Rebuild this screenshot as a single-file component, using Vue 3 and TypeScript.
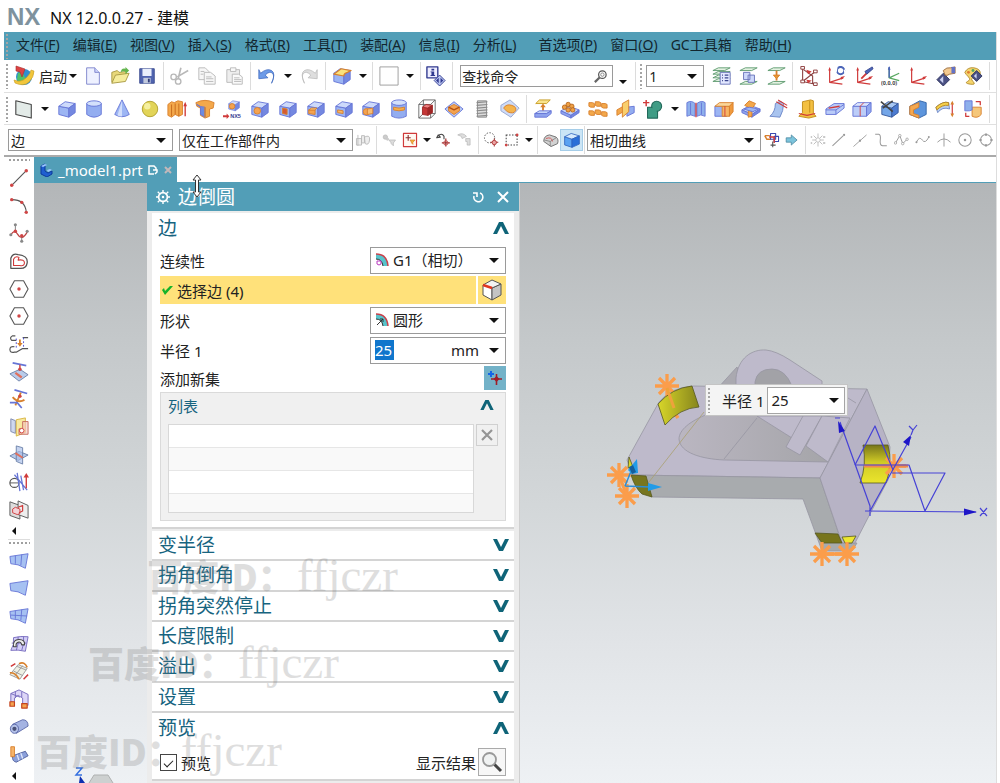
<script setup lang="ts">
import { ref } from 'vue'

type Item =
  | { kind: 'icons'; names: string[]; active?: string }
  | { kind: 'arrow' | 'sep' | 'grip' | 'start' | 'search' | 'tail' }
  | { kind: 'select'; label: string; value: string; size: string }

const menus: { text: string; key?: string; wide?: boolean }[] = [
  { text: '文件', key: 'F' },
  { text: '编辑', key: 'E' },
  { text: '视图', key: 'V' },
  { text: '插入', key: 'S' },
  { text: '格式', key: 'R' },
  { text: '工具', key: 'T' },
  { text: '装配', key: 'A' },
  { text: '信息', key: 'I' },
  { text: '分析', key: 'L' },
  { text: '首选项', key: 'P', wide: true },
  { text: '窗口', key: 'O' },
  { text: 'GC工具箱' },
  { text: '帮助', key: 'H' },
]

const p = (d: string, fill = 'none', stroke = 'none', w = 1) =>
  `<path d="${d}" fill="${fill}" stroke="${stroke}" stroke-width="${w}" stroke-linejoin="round"/>`
const c = (x: number, y: number, r: number, fill = 'none', stroke = 'none', w = 1) =>
  `<circle cx="${x}" cy="${y}" r="${r}" fill="${fill}" stroke="${stroke}" stroke-width="${w}"/>`

const BL = '#6675d6'
const OR = '#d8802c'
const RD = '#d03a3a'
const GY = '#b8b8b8'

const cube = (f = '#9cb5f3', t = '#cddafb', s = '#7488e0', k = BL) =>
  p('M2 8l11 2v10L2 17z', f, k) + p('M2 8l7-5 11 2-7 5z', t, k) + p('M13 10l7-5v10l-7 5z', s, k)
const slab = (y: number, f = '#c7d6fa', k = BL) =>
  p(`M1 ${y}l9-5 11 4-9 6z`, f, k) + p(`M1 ${y}v3l11 5v-3z`, '#8fa4ee', k) + p(`M12 ${y + 5}l9-6v3l-9 6z`, '#7688e0', k)
const layer = (y: number, k = '#5e9a70') => p(`M1 ${y}l6-3h13l-6 3z`, '#e4f2e2', k)
const axes = p('M4 3v15l15-5M4 18l14 2', 'none', RD, 1.3) + p('M2.5 5L4 1l1.5 4zM16 12l5-1-4 4z', RD)
const sheet = p('M1 6l20-3-3 16Q10 14 2 14z', '#a6c1f2', BL)
const dot = (x: number, y: number) => c(x, y, 1.9, '#cf4545')
const hex = p('M6 2h10l5 9-5 9H6l-5-9z', '#fff', '#555', 1.2) + dot(11, 11)

const icons: Record<string, string> = {
  world: c(11, 12, 8, '#2f8fd0') + p('M5 8q5-2 6 2t4 3-3 6q-6 1-8-5z', '#4fc06a') + p('M1 15q7 3 12-2t5-8l3 1q0 6-5 11T2 18z', '#f1c63b', '#c79a20', 0.6) + p('M3 1l9 3-3 8-2-5-4-1z', '#dc4343', '#a62d2d', 0.6),
  new: p('M4 2h9l5 5v13H4z', '#eef1ff', '#7c83cb') + p('M13 2v5h5', '#cdd3fa', '#7c83cb'),
  open: p('M2 18V7l6-2 2 2 8-1v5', '#e8d87a', '#a79741') + p('M2 19l4-9 15-2-4 9z', '#f5ec9c', '#a79741') + p('M12 7q0-5 5-4V1l4 4-4 4V6q-3-1-5 1z', '#65b64f'),
  save: p('M3 3h16v16H3z', '#5064b0', '#3c4c91') + p('M6 3h10v8H6z', '#e9eefb') + p('M7 13h8v6H7z', '#c1c9dd') + p('M12 14h2v4h-2z', '#2f3c78'),
  cut: p('M12 2L9 14M20 5L8 12', 'none', GY, 1.8) + c(4, 12, 3, 'none', GY, 1.5) + c(9, 17, 3, 'none', GY, 1.5),
  copy: p('M2 2h7l4 4v9H2z', '#f7f7f7', GY) + p('M8 7h7l5 4v9H8z', '#f7f7f7', GY) + p('M10 12h6M10 14h8M10 17h8M4 6h4M4 9h3', 'none', GY),
  paste: p('M2 4h14v14H2z', '#eee', GY) + p('M6 2h6v4H6zM8 9h7l4 3v8H8z', '#fafafa', GY) + p('M10 13h6M10 15h8M10 17h8', 'none', GY),
  undo: p('M4 8q7-6 12-3t0 14q4-8 1-11t-8 2l3 3-10 1V4z', '#6d9be8', '#3a66bd', 0.8),
  redo: p('M18 8q-7-6-12-3t0 14Q2 11 5 8t8 2l-3 3 10 1V4z', '#dedede', GY, 0.8),
  edge: cube() + p('M2 9l8-6 11 2-4 2q-4 1-4 4L2 9z', '#fae27d', OR, 1.3),
  blank: p('M1 1h20v20H1z', '#fff', '#999'),
  info: p('M1 1h12v12H1z', '#eef', '#30398f', 1.5) + p('M6 3h3v2H6zM5 6h4v4h1v1H5v-1h1V7H5z', '#30398f') + p('M15 10l6 6-6 6-6-6z', '#b9c4f0', '#30398f') + p('M14 13v6l-3-3zM16 13l3 3-3 3z', '#30398f'),
  layers1: layer(17) + layer(13) + layer(9) + layer(5) + p('M9 7h11v13H9z', '#e3e8ff', '#6872b8') + p('M11 10h1M14 10h4M11 13h1M14 13h4M11 16h1M14 16h4', 'none', '#3b468e', 1.3),
  layers2: layer(5) + layer(20) + p('M5 7h7v8H5zM10 10h7v8h-7z', '#cdd8fa', '#6872b8'),
  layers3: layer(5) + layer(20) + p('M10.500 5v11', 'none', OR, 2) + p('M7 10h7l-3.500 4z', '#e69732', OR),
  wcs1: p('M4 2v15l14 3M4 17L18 6M5 4l10 7v8', 'none', '#8a4040', 1.2) + [[4, 2], [4, 17], [18, 6], [18, 20]].map(([x, y]) => p(`M${x - 2} ${y - 1.500}h4v3h-4z`, '#fff', '#8a3535')).join('') + p('M8 4l6 2-4 3zM8 15l6 1-4 3z', RD),
  wcs2: axes + c(16, 5, 4, 'none', '#4c65b8', 2.200) + p('M12 1l-1 6M20 4l1 4', 'none', '#fff', 1.5),
  wcs3: axes + p('M8 14l8-8', 'none', RD, 2) + p('M12 6l8-5 1 2-7 6z', '#4c65b8', '#3a4a92'),
  wcs4: p('M9 2v11l11-5M9 13l11 3', 'none', '#58a860', 1.4) + p('M9 1v12', 'none', '#4c65b8', 1.5) + p('M7.500 4L9 0l1.500 4z', '#4c65b8') + '<text x="0" y="21" font-size="6" font-weight="700" font-family="Noto Sans" fill="#444">(0,0,0)</text>',
  wcs5: axes,
  hand: p('M8 8l7 7-7 7-7-7z', '#4a5083', '#30355f') + p('M8 11v8l-4-4z', '#cdd2f2') + p('M8 5q4-4 8-3l5-1v7l-6 1q-3 2-5 1z', '#f3c98e', '#9b6a3a') + p('M17 1h4v7h-4z', '#6372c6'),
  palette: p('M2 7q3-6 10-5t7 6-6 5-2 4-3 3-3-3 1-5-4-5z', '#f4d46c', '#b38c2e') + c(6, 7, 1.600, '#e07b2f') + c(11, 5, 1.600, '#58a860') + p('M15 5l6 6-6 6-6-6z', '#4a5083', '#30355f') + p('M15 8v6l-3-3z', '#cdd2f2'),

  plane: p('M2 2l17 4v15L2 17z', '#e3ebe8', '#444', 1.200),
  block: cube(),
  cylinder: p('M3 5v12q8 6 16 0V5z', '#93adf0', BL) + '<ellipse cx="11" cy="5" rx="8" ry="3" fill="#d3e0fb" stroke="#6675d6"/>',
  cone: p('M11 1L3 17q8 5 16 0z', '#9db6f4', BL) + p('M11 2L6 18q3 2 5 1z', '#d2defb'),
  sphere: c(11, 11, 8.500, '#e2d458', '#b09f2c') + c(8, 8, 3.500, '#f5f0a0'),
  extrude: p('M1 6l4-3 3 1 4-2 5 1v14l-4 2-4-2-4 3-4-2z', '#f3a84b', OR) + p('M5 6v13M9 5v12M13 5v14', 'none', '#c76a1c') + p('M20 19V6', 'none', RD, 1.500) + p('M18 8l2-5 2 5z', RD),
  revolve: p('M1 4q10-5 20 0l-1 6-4 1v8l-5 2-5-3v-8l-4-2z', '#f3a84b', OR) + p('M2 6l4 3v8l5 3V9q-5 0-9-3z', '#6d8be0', BL) + p('M11 9v11', 'none', OR, 1.500),
  nx5: '<g transform="translate(5) scale(.65)">' + cube() + '</g>' + c(10, 8, 3, '#f4a350', OR) + p('M0 18h4v-2l3 3-3 3v-2H0z', RD) + '<text x="8" y="21" font-size="6" font-weight="700" font-family="Liberation Sans" fill="#333a90">NX5</text>',
  hole: cube() + c(8, 13, 3.600, '#f4a350', OR),
  boss: cube() + p('M5 10l5 1v6l-5-1z', '#d65a32', OR),
  pocket: cube() + p('M3 12h7v5l-7-1z', '#f4a350', OR) + p('M3 12l3-2h6l-2 2z', '#fbd28c', OR),
  pad: cube() + p('M4 12l6 1v3l-6-1z', '#f7b763', OR),
  slot: cube() + p('M4 13q4-2 7 1l-1 2q-4-2-6 0z', '#f4a350', OR),
  emboss: cube() + c(6, 14, 3.500, '#f4a350', OR) + p('M7 11l6-1v6l-6 1z', '#f7bd74', OR),
  groove: p('M3 4v15q8 4 16 0V4z', '#93adf0', BL) + p('M5 9q6 2 12 0v3q-6 2-12 0z', '#f4b04c', OR) + '<ellipse cx="11" cy="4" rx="8" ry="3" fill="#d3e0fb" stroke="#6675d6"/>',
  shell: p('M2 6h13v15H2zM7 1h13v15H7zM2 6l5-5M15 6l5-5M2 21l5-5M15 21l5-5', 'none', '#666') + p('M6 9l6 1v8l-6-1z', '#c53636', '#a12a2a') + p('M6 9l4-3 7 1-5 3z', '#ed8080', '#a12a2a') + p('M12 10l5-3v8l-5 3z', '#a12626', '#a12a2a'),
  offset: p('M1 11l10-8 10 8-10 9z', '#b9cbf6', BL) + p('M5 9l6-3 6 3v4l-6 4-6-4z', '#f4a350', OR) + p('M5 9l6 3 6-3', 'none', '#b34f12', 1.500),
  thread: p('M6 2h10v18H6z', '#dcdcdc', '#888') + p('M5 4l12-1M5 7l12-1M5 10l12-1M5 13l12-1M5 16l12-1M5 19l12-1', 'none', '#8a8a8a', 1.200),
  feat: p('M11 1l10 9-9 10L1 13V7z', '#cfdcf8', '#93a3d0') + p('M4 10q3-5 9-3t4 6-9 1z', '#f4b44c', OR),
  datum: p('M3 5l4-4h12l-4 4z', '#f9e38c', '#c79a20') + p('M11 7v6', 'none', OR, 2) + p('M8 9l3-4 3 4z', OR) + p('M2 16l5-3h13l-5 3z', '#c7d6fa', BL) + p('M2 16v4h13l5-4v-3l-5 3z', '#8fa4ee', BL),
  pattern: slab(13) + [[5, 9], [9, 6], [13, 8], [9, 12], [14, 12]].map(([x, y]) => c(x, y, 2.400, '#efa044', '#b8691f')).join(''),
  pattern2: [[1, 3], [8, 2], [15, 4], [1, 12], [8, 11], [15, 13]].map(([x, y]) => p(`M${x} ${y + 1}h4l2 1v4h-4l-2-1z`, '#f3a84b', OR)).join(''),
  mirror: p('M1 12l7-4v6l-7 4z', '#f3a84b', OR) + p('M12 9l8-1v7l-8 4z', '#93adf0', BL) + p('M7 5l7-4v13l-7 6z', '#f9cf6d', OR),
  unite: p('M0 4h7M3.500 1v7', 'none', RD, 1.600) + p('M5 9h11v12H5z', '#3f9c85', '#22695a', 1.200) + c(15, 8, 5.500, '#3f9c85', '#22695a', 1.200) + p('M6 10h9v10H6z', '#3f9c85'),
  sew: p('M1 4q5-3 9 1v14q-5-3-9 0zM12 5q5-4 9-1v15q-5-3-9 0z', '#8eb0ec', BL) + p('M5 4v13M17 4v13', 'none', BL) + p('M11 4v16', 'none', RD, 1.400),
  patch: p('M1 8h13v11H1z', '#9cb5f3', BL) + p('M9 8h8v11H9z', '#f6b565', OR) + p('M1 8l5-4h15l-4 4z', '#fad79a', OR) + p('M17 8l4-4v10l-4 5z', '#f09a3c', OR) + p('M12 8v11', 'none', RD),
  split: slab(12) + p('M9 2l7 3-4 6v8l-4 1V9L4 7z', '#f3a84b', OR) + p('M3 11l6-2 10 2-6 3z', '#9db6f4', BL),
  trim: p('M7 5q6-4 9 0 0 8-4 15l-11-1q6-5 6-14z', '#a9c4ef', '#6b86c8') + p('M8 3l12 7M10 1l10 6', 'none', RD, 1.200),
  flange: p('M6 3l9-2 3 1v14l3 3-8 2-11-2 4-4z', '#f3c042', '#c08a17') + p('M14 2v13', 'none', '#c08a17') + p('M2 16l9 2 9-2', 'none', RD, 1.200),
  bend: p('M1 11l9-6h11v5l-9 7H1z', '#b9cbf8', BL) + p('M1 12h11l9-6M12 12v5', 'none', BL) + p('M4 10l12-2', 'none', RD, 1.500),
  divide: p('M1 8h15v11H1z', '#bccdf8', BL) + p('M1 8l5-4h15l-5 4z', '#dde6fd', BL) + p('M16 8l5-4v10l-5 5z', '#90a6ee', BL) + p('M9 19V8l4-4', 'none', RD),
  remove: cube('#74a6e8', '#a9c9f4', '#4c7bd0', '#37589c') + p('M1 3l13 11M14 2L3 10', 'none', '#444', 1.800),
  replace: p('M2 8l11-6 7 2v13l-8 4-10-4z', '#5d95dc', '#3264a8') + p('M2 8l10-4v5l-6 3v4l6 2v3L2 17z', '#f4a850', OR),
  move: p('M1 9q8-7 14-5l1 7q-8-3-13 4z', '#b9cfee', '#6b86c8') + p('M1 9q8-7 14-5v3Q8 6 2 12z', '#f4d04c', '#b9861b') + p('M19 4v14', 'none', RD, 1.300) + p('M17 6l2-4 2 4zM17 16l2 4 2-4z', OR),
  resize: p('M10 9h10v8q-4 5-10 2z', '#f5c77a', OR) + p('M2 2h8v10l-3 1H2z', '#8eb0ec', BL) + p('M3 15v4h4M14 3h5v4', 'none', RD, 1.400),

  ghost: p('M4 4v15M2 9h7v9H2zM9 5h4v10H9zM13 7q8-4 7 4t-6 5z', '#eee', GY, 1.200),
  filter1: c(6, 7, 3, '#ccc', GY) + c(9, 10, 2, '#ccc') + p('M11 11h9l-3 4v4l-3-3v-1z', '#ddd', GY),
  filter2: p('M2 2h18v18H2z', '#fff8f2', RD, 1.600) + p('M5 8h7M8.500 4v8', 'none', '#8a2c2c', 1.500) + p('M11 11h7l-3 3v3l-2-2v-1z', '#f4b73c', OR),
  snapcurve: p('M2 6q6-6 9 0v4M1 8l2-4 3 3z', 'none', '#444', 1.500) + p('M8 15h11M13.500 9v11', 'none', '#9c2c2c', 1.600) + c(13.500, 15, 3, 'none', '#c34b4b', 1.300),
  ghost2: p('M1 4q7-4 12 2l-6 3-1-3zM12 9h6v9h-4v-5h-2z', '#ddd', GY),
  lasso: c(9, 8, 7, 'none', '#555', 1.300).replace('/>', ' stroke-dasharray="2 2"/>') + p('M10 14h11M15.500 9v11', 'none', '#9c2c2c', 1.400) + c(15.500, 14.500, 3, '#e9a3a3', '#b43c3c', 1.300),
  rect: '<rect x="3" y="4" width="15" height="14" fill="none" stroke="#444" stroke-width="1.400" stroke-dasharray="2 2"/>' + dot(3, 18) + dot(18, 4),
  shade1: p('M1 13q0-8 8-9l9 3q4 3 2 9l-9 4z', '#d2d2d2', '#666', 1.200) + p('M2 11l8 2 8-5M10 13v6', 'none', '#777') + p('M4 9q8-3 9 4', 'none', RD),
  shade2: p('M2 7l9 3v10l-9-3z', '#5aa2f2', '#2f63be') + p('M2 7l8-4 10 3-9 4z', '#d8ebfd', '#2f63be') + p('M11 10l9-4v10l-9 4z', '#2a6fd8', '#2f63be'),
  route: p('M1 5h7M1 5l3 5h6', 'none', OR, 2) + p('M9 2h7v8H9zM14 6h6v7h-6z', '#fff', '#3a4ab0', 1.500) + p('M7 7h7v8', 'none', RD, 2) + p('M12 13v8M9 18h7', 'none', '#555', 1.500),
  next: p('M3 8h7V4l8 7-8 7v-4H3z', '#7cc4dc', '#43829a'),
  s1: p('M11 2v18M3 11h16M5 5l12 12M17 5L5 17', 'none', GY, 1.200) + c(11, 11, 3, '#fff', GY) + p('M1 7h2M1 15h2M18 7h3M18 15h3', 'none', GY, 2),
  s2: p('M2 19L17 5', 'none', '#999', 1.400) + c(18, 4, 1.500, '#999'),
  s3: p('M2 20L20 4', 'none', '#999', 1.200) + c(11, 12, 1.600, '#999'),
  s4: p('M3 3h5q3 1 2 8t3 8h6', 'none', '#999', 1.400),
  s5: p('M2 15L8 5l4 11 6-6', 'none', '#999', 1.300) + [[2, 15], [8, 5], [12, 16], [18, 10]].map(([x, y]) => c(x, y, 1.700, '#fff', '#999')).join(''),
  s6: p('M2 14q4-9 8-3t9-4', 'none', '#999', 1.300) + c(2, 14, 1.400, '#999') + c(19, 7, 1.400, '#999'),
  s7: p('M11 2v18M2 14q9-9 18 0', 'none', '#999', 1.300),
  s8: c(11, 11, 8.500, 'none', '#999', 1.400) + c(11, 11, 1.700, '#999'),
  s9: c(11, 11, 7.500, 'none', '#999', 1.400) + p('M11 2v3M11 17v3M2 11h3M17 11h3', 'none', '#999', 3),

  line: p('M3 19L19 3', 'none', '#555', 1.200) + dot(3, 19) + dot(19, 3),
  arc: p('M3 4q15 0 16 14', 'none', '#555', 1.200) + dot(3, 4) + dot(14, 7) + dot(19, 18),
  spline: p('M2 13q4-7 8 0t10-3', 'none', '#b44', 1.400) + p('M7 2v8M14 14v5', 'none', '#777') + dot(7, 9) + dot(14, 14) + c(7, 2, 1.700, '#888') + c(2, 13, 1.700, '#888') + c(14, 20, 1.700, '#888') + c(20, 9, 1.700, '#888'),
  shape: p('M2 19V8q2-6 8-4 11 1 10 9-1 7-9 6z', '#fff', '#555', 1.400) + p('M5 16V9q2-4 6-2l-1 3q7-1 7 3t-5 3z', '#fff', RD, 1.200),
  hex,
  bridge: p('M7 2H4Q0 4 3 7h5M6 14q-5-1-5 3t5 3h2l7-4M15 4h6M15 16h6', 'none', '#555', 1.300) + p('M8 5v11M16 4v12', 'none', '#4a4ad0', 1).replace('/>', ' stroke-dasharray="2 2"/>') + p('M12 6v5', 'none', OR, 2) + p('M9 10h6l-3 4z', OR),
  project: p('M1 13l11-5 9 6-10 7z', '#b9cbea', '#6b80a8') + p('M7 12l7 5', 'none', '#e0705c', 2.500) + p('M4 1l15 3', 'none', BL, 1.800) + p('M12 3v6', 'none', RD, 1.500) + dot(12, 8),
  combine: p('M6 1l14 4', 'none', BL, 1.800) + p('M4 9q6 7 13 3M13 4L7 18', 'none', OR, 2) + p('M1 15h8l5 6', 'none', BL, 1.800) + dot(12, 8),
  isect: p('M2 2l5 2v14l-5-2z', '#cfd8ef', '#7a87ad') + p('M8 3l10-2v16L8 21z', '#f8e9a0', '#d7b43e') + p('M15 5h6v14h-10v-6h4z', '#f4c6c0aa', '#c46b5c') + c(14, 15, 2.500, '#fff', RD),
  section: p('M1 12l10-5 10 4-11 6z', '#b9cbea', '#6b80a8') + p('M8 1l7 2v18l-7-3z', '#a9bfe8aa', '#6b80a8') + p('M7 9l8 5', 'none', '#e0705c', 2.200),
  derive: c(6, 12, 5, 'none', '#555', 1.300) + p('M1 12h10', 'none', '#555') + p('M9 1l3 20M6 3l14 17M13 4l3 16', 'none', BL, 1.400) + p('M19 18V4', 'none', RD, 1.500) + p('M16 6l3-5 3 5z', RD),
  twin: p('M1 2l11 4v15L1 17z', '#ddd', '#555') + p('M10 1l11 5v14l-11-4z', '#eee', '#555') + p('M4 10l3-2 5 2v5l-3 1-5-2z', '#f3d3d8', RD) + p('M10 8l5-2v6l-4 2', 'none', RD, 1.300),
  surf1: sheet + p('M7 5l0 9M14 4l-1 12', 'none', BL),
  surf2: sheet,
  surf3: sheet + p('M7 5l0 9M14 4l-1 12M2 10l18 1', 'none', BL),
  surf4: p('M5 4q8-2 16-1l-3 16q-8-2-16-1 4-6 3-14z', '#d3cef6', '#7468bd') + p('M10 3q1 8-2 15M16 3q1 8-2 15M3 10h16', 'none', '#7468bd') + p('M5 14q-1-8 6-8t6 6l-3 0q-1-4-4-3t-2 5z', '#eee', '#444', 1.200),
  surf5: p('M1 15L10 4l10 4-8 12z', '#eef0e4', '#999') + p('M5 11l10 5M9 6l10 4M6 17l9-12', 'none', '#999') + p('M1 13q6-1 10 7M11 3q6-3 9 4', 'none', OR, 1.800) + p('M2 6l5-3M16 20l5-5', 'none', RD, 1.600),
  surf6: p('M2 14V5l9-4 10 5v12l-6-2v-6l-5-3-4 3v5z', '#ddd6f7', '#7468bd') + p('M7 3v7M14 3v6M2 5l10 4', 'none', '#7468bd') + p('M1 14h5v5H1zM14 16h6v5h-6z', '#f4a350', '#c3431e', 1.300),
  tube: p('M4 8L15 3q6 0 6 7L8 18z', '#a4b3e2', '#5a68a8') + '<ellipse cx="6" cy="13" rx="4.500" ry="5" fill="#b4c1e8" stroke="#5a68a8"/>' + c(6, 13, 2.300, '#4a5278'),
  sweep: p('M4 13l14-5 3 5-13 7q-5-1-4-7z', '#8ba0da', '#4f5f9c') + p('M9 12l2 6M13 10l2 6', 'none', '#dfe6fa', 1.500) + p('M2 3h4v11H2z', '#f6b469', OR),
}

const icon = (name: string) => icons[name] ?? ''

const rows: Item[][] = [
  [
    { kind: 'grip' }, { kind: 'start' },
    { kind: 'icons', names: ['new', 'open', 'save'] }, { kind: 'sep' },
    { kind: 'icons', names: ['cut', 'copy', 'paste'] }, { kind: 'sep' },
    { kind: 'icons', names: ['undo'] }, { kind: 'arrow' },
    { kind: 'icons', names: ['redo'] }, { kind: 'sep' },
    { kind: 'icons', names: ['edge'] }, { kind: 'arrow' }, { kind: 'sep' },
    { kind: 'icons', names: ['blank'] }, { kind: 'arrow' }, { kind: 'sep' },
    { kind: 'icons', names: ['info'] }, { kind: 'sep' },
    { kind: 'search' }, { kind: 'sep' }, { kind: 'grip' },
    { kind: 'select', label: '图层', value: '1', size: 'tiny' },
    { kind: 'icons', names: ['layers1', 'layers2', 'layers3'] }, { kind: 'sep' },
    { kind: 'icons', names: ['wcs1', 'wcs2', 'wcs3', 'wcs4', 'wcs5', 'hand', 'palette'] }, { kind: 'sep' }, { kind: 'tail' },
  ],
  [
    { kind: 'grip' }, { kind: 'icons', names: ['plane'] }, { kind: 'arrow' },
    { kind: 'icons', names: ['block', 'cylinder', 'cone', 'sphere', 'extrude', 'revolve', 'nx5', 'hole', 'boss', 'pocket', 'pad', 'emboss', 'groove', 'shell', 'offset', 'thread', 'feat'] },
    { kind: 'sep' },
    { kind: 'icons', names: ['datum', 'pattern', 'pattern2', 'mirror', 'unite'] }, { kind: 'arrow' },
    { kind: 'icons', names: ['sew', 'patch', 'split', 'trim', 'flange', 'bend', 'divide', 'remove', 'replace', 'move', 'resize'] },
    { kind: 'sep' }, { kind: 'tail' },
  ],
  [
    { kind: 'select', label: '类型过滤器', value: '边', size: 'small' },
    { kind: 'select', label: '选择范围', value: '仅在工作部件内', size: 'large' },
    { kind: 'icons', names: ['ghost'] }, { kind: 'sep' },
    { kind: 'icons', names: ['filter1', 'filter2'] }, { kind: 'arrow' },
    { kind: 'icons', names: ['snapcurve', 'ghost2'] }, { kind: 'sep' },
    { kind: 'icons', names: ['lasso', 'rect'] }, { kind: 'arrow' }, { kind: 'sep' },
    { kind: 'icons', names: ['shade1', 'shade2'], active: 'shade2' }, { kind: 'sep' },
    { kind: 'select', label: '曲线规则', value: '相切曲线', size: 'large' },
    { kind: 'icons', names: ['route', 'next'] }, { kind: 'sep' },
    { kind: 'icons', names: ['s1', 's2', 's3', 's4', 's5', 's6', 's7', 's8', 's9'] },
  ],
]

const railTop = ['line', 'arc', 'spline', 'shape', 'hex', 'hex', 'bridge', 'project', 'combine', 'isect', 'section', 'derive', 'twin']
const railBottom = ['surf1', 'surf2', 'surf3', 'surf4', 'surf5', 'surf6', 'tube', 'sweep']

const collapsed = ['变半径', '拐角倒角', '拐角突然停止', '长度限制', '溢出', '设置']
const preview = ref(true)
const radius = ref('25')
const stars = [[667, 386], [619, 475], [627, 496], [894, 466], [822, 554], [847, 554]]
</script>

<template>
  <div class="app">
    <header class="title">
      <span class="logo">NX</span>
      <span class="caption">NX 12.0.0.27 - 建模</span>
    </header>

    <div class="window">
      <nav class="menubar">
        <span class="grip"></span>
        <button v-for="m in menus" :key="m.text" type="button" :class="{ wide: m.wide }">
          {{ m.text }}<template v-if="m.key">(<u>{{ m.key }}</u>)</template>
        </button>
      </nav>

      <div v-for="(row, r) in rows" :key="r" class="toolbar" :class="'row' + r">
        <template v-for="(item, i) in row" :key="i">
          <div v-if="item.kind === 'icons'" class="group" :style="{ flexGrow: item.names.length }">
            <button
              v-for="n in item.names" :key="n" type="button" class="tool"
              :class="{ active: item.active === n }" :aria-label="n"
            >
              <svg viewBox="0 0 22 22" v-html="icon(n)"></svg>
            </button>
          </div>
          <button v-else-if="item.kind === 'arrow'" type="button" class="drop" aria-label="更多"><i class="tri"></i></button>
          <span v-else-if="item.kind === 'sep'" class="sep"></span>
          <span v-else-if="item.kind === 'grip'" class="grip"></span>
          <span v-else-if="item.kind === 'tail'" class="tail"></span>
          <button v-else-if="item.kind === 'start'" type="button" class="start">
            <svg viewBox="0 0 22 22" v-html="icon('world')"></svg>启动<i class="tri"></i>
          </button>
          <div v-else-if="item.kind === 'search'" class="search">
            <label class="finder">
              <input type="text" value="查找命令" aria-label="查找命令" />
              <svg viewBox="0 0 16 16"><circle cx="10" cy="6" r="4" fill="#fff" stroke="#555" stroke-width="1.300" /><circle cx="10" cy="6" r="1.800" fill="none" stroke="#888" /><path d="M7 9l-5 5" stroke="#666" stroke-width="2.400" /></svg>
            </label>
            <button type="button" class="drop low" aria-label="更多"><i class="tri"></i></button>
          </div>
          <div v-else class="combo" :class="item.size">
            <select :aria-label="item.label"><option>{{ item.value }}</option></select><i class="tri"></i>
          </div>
        </template>
      </div>

      <div class="work">
        <aside class="rail">
          <span class="dots"></span>
          <div class="stack" :style="{ flexGrow: railTop.length }">
            <button v-for="(n, i) in railTop" :key="i" type="button" class="tool" :aria-label="n">
              <svg viewBox="0 0 22 22" v-html="icon(n)"></svg>
            </button>
          </div>
          <button type="button" class="back" aria-label="展开"><i></i></button>
          <span class="dots ruled"></span>
          <div class="stack" :style="{ flexGrow: railBottom.length }">
            <button v-for="n in railBottom" :key="n" type="button" class="tool" :aria-label="n">
              <svg viewBox="0 0 22 22" v-html="icon(n)"></svg>
            </button>
          </div>
          <button type="button" class="back" aria-label="展开"><i></i></button>
        </aside>

        <main class="stage">
          <div class="tabs">
            <button type="button" class="tab">
              <svg class="part" viewBox="0 0 14 14"><path d="M2 3l4-2v7l3 2 4-2v3l-5 3-6-3z" fill="#1f5fd0" stroke="#0d3a9c" /><path d="M2 3l4-2 2 1-4 2zM8 7l3-1 2 1-4 2z" fill="#9cc8ff" /></svg>
              _model1.prt
              <svg class="mark" viewBox="0 0 10 10"><path d="M6 9H1V1h5l2 2v2M5 5h4v2L7 9" fill="none" stroke="#fff" stroke-width="1.500" /></svg>
              <svg class="mark" viewBox="0 0 10 10"><path d="M2 2l6 6M8 2L2 8" stroke="#c3b8ba" stroke-width="2" /></svg>
            </button>
          </div>

          <div class="canvas">
            <svg class="model" viewBox="590 330 406 260" stroke-linejoin="round">
              <defs>
                <linearGradient id="fillet" x1="0" y1="0" x2="1" y2="0"><stop offset="0" stop-color="#d8d629" /><stop offset="1" stop-color="#86851c" /></linearGradient>
                <linearGradient id="fillet2" x1="0" y1="0" x2="0" y2="1"><stop offset="0" stop-color="#77751b" /><stop offset=".450" stop-color="#cfca25" /><stop offset="1" stop-color="#ebe52c" /></linearGradient>
                <linearGradient id="bore" x1="0" y1="0" x2="1" y2="0"><stop offset="0" stop-color="#bab6c1" /><stop offset="1" stop-color="#a5a5a9" /></linearGradient>
              </defs>
              <g stroke="#9795a2" stroke-width=".8">
                <path d="M737 367L716 390h30z" fill="#aaa9b0" />
                <path d="M659 402Q670 388 692 386L867 389 820 478 632 475 627 460z" fill="#bebacb" />
                <path d="M632 475L820 478 842 543 857 543 852 551H822L803 499 652 497 638 489z" fill="#a8abae" />
                <path d="M820 478L867 389 890 447 888 480 871 512 855 543H842z" fill="#b7b3c5" />
                <path d="M708 414C690 421 679 430 679 439C680 453 702 459 724 460L828 462 786 414z" fill="url(#bore)" />
                <path d="M757 416L792 438 806 416z" fill="#bebacb" />
                <path d="M736 392V378C738 358 752 349 766 350Q776 351 790 360L822 381V392z" fill="#bebacb" />
                <path d="M755 392V382Q757 369 772 369 785 369 792 386V392z" fill="#a2a2a7" />
                <path d="M803 416L786 447 800 455 822 416z" fill="#bebacb" />
                <path d="M822 416L806 446 828 462 850 418z" fill="#bebacb" />
                <path d="M848 398L856 403" fill="none" />
                <path d="M757 418L724 459" fill="none" />
                <path d="M704 412L649 482" fill="none" stroke="#a99f70" />
              </g>
              <g stroke="#555820" stroke-width=".8">
                <path d="M631 475L646 476 652 497 642 494Q635 488 631 475z" fill="#77761f" />
                <path d="M629 457L633 467 628 468z" fill="#d8d629" />
                <path d="M863 445H888Q893 464 886 483H860Q867 465 863 445z" fill="url(#fillet2)" />
                <path d="M815 533L838 534 842 543H822z" fill="#77751b" />
                <path d="M842 537L856 536 852 543H845z" fill="#ece62f" />
              </g>
              <g stroke="#fb9d4b" stroke-width="3.300">
                <g v-for="([x, y], i) in stars" :key="i">
                  <path :d="`M${x - 12} ${y}h24M${x} ${y - 12}v24M${x - 8} ${y - 8}l16 16M${x + 8} ${y - 8}l-16 16`" />
                </g>
                <path d="M674 412l4 6M822 554h25M619 475l8 21" />
              </g>
              <path d="M658 404Q672 388 692 386L699 407Q680 408 665 425z" fill="url(#fillet)" stroke="#555820" stroke-width=".8" />
              <path d="M667 388l7 20" stroke="#eea23c" stroke-width="3" />
              <path d="M864 466h44" stroke="#f08a4c" stroke-width="3" />
              <path d="M625 486L632 469M625 486L650 487" stroke="#2c8ed6" stroke-width="1.500" />
              <path d="M628 470L637 459 638 473 632 474z" fill="#219be8" /><path d="M629 467l4-2 3 7-4 2z" fill="#155e9c" />
              <path d="M648 483L662 487 648 491z" fill="#219be8" />
              <g stroke="#4642d6" fill="none" stroke-width="1.200">
                <path d="M865 511L976 512M870 516V506L840 422M870 511L911 437" />
                <path d="M855 465L875 426 893 470M855 465H909L925 511 945 473H892" />
                <path d="M980 508l7 8M987 508l-7 8M909 426l4 4 4-5M913 430l-2 5M835 418h5" />
              </g>
              <path d="M964 508.500L977 512 964 515.500zM838 421L845 431 839 433zM911 435L909 446 903 442z" fill="#1e16c8" />
            </svg>

            <svg class="triad" viewBox="0 0 44 16"><path d="M5 1h6L5 8h6" fill="none" stroke="#3670e0" stroke-width="1.500" /><path d="M9 9l5 7H8z" fill="#0d2fb0" /><path d="M18 16l5-8h14l5 8" fill="#cdd0d0" stroke="#aeb0b0" /></svg>

            <form class="bubble" @submit.prevent>
              <span class="grip"></span>
              <label for="r1">半径 1</label>
              <span class="field"><input id="r1" v-model="radius" type="text" /><i class="tri"></i></span>
            </form>

            <section class="dialog" aria-label="边倒圆">
              <header class="bar">
                <svg viewBox="0 0 16 16"><circle cx="8" cy="8" r="5" fill="none" stroke="#fff" stroke-width="2" /><circle cx="8" cy="8" r="1.400" fill="#fff" /><path d="M8 0v3M8 13v3M0 8h3M13 8h3M2 2l3 3M11 11l3 3M14 2l-3 3M5 11l-3 3" stroke="#fff" stroke-width="1.600" /></svg>
                <h1>边倒圆</h1>
                <button type="button" aria-label="重置"><svg viewBox="0 0 14 14"><path d="M9 3a4.500 4.500 0 1 1-6 3M2 3h4v4" fill="none" stroke="#fff" stroke-width="1.600" /></svg></button>
                <button type="button" aria-label="关闭"><svg viewBox="0 0 14 14"><path d="M2 2l10 10M12 2L2 12" stroke="#fff" stroke-width="2" /></svg></button>
              </header>

              <div class="body">
                <section class="card first">
                  <button type="button" class="head">边<svg class="chev" viewBox="0 0 16 12"><path d="M0 12L6 0h4l6 12h-4L8 4 4 12z" fill="#0f6478" /></svg></button>
                  <div class="line">
                    <label for="cont">连续性</label>
                    <span class="combo wide">
                      <svg viewBox="0 0 14 14"><path d="M1 1q11 0 12 12H8Q7 6 1 6z" fill="#58c3cb" /><path d="M1 1q11 0 12 12" fill="none" stroke="#c9404b" stroke-width="1.500" /><path d="M1 6q6 0 7 7" fill="none" stroke="#333" /><path d="M2 8h4v3q-2 2-4 0z" fill="#fff" stroke="#b93ac0" /></svg>
                      <select id="cont"><option>G1（相切）</option></select><i class="tri"></i>
                    </span>
                  </div>
                  <div class="line pick">
                    <div class="chosen"><svg viewBox="0 0 12 12"><path d="M1 6l3 5 8-9-3 0-5 5-1-3z" fill="#16b32a" /></svg>选择边 (4)</div>
                    <button type="button" class="edgebtn" aria-label="选择边"><svg viewBox="0 0 22 22"><path d="M2 6l9 3v12l-9-5z" fill="#fff" stroke="#555" /><path d="M11 9l9-4v11l-9 5z" fill="#c4c4c4" stroke="#555" /><path d="M2 6l9-5 9 4-9 4z" fill="#f3f3f3" stroke="#555" /><path d="M2 6l9 3" stroke="#e0361e" stroke-width="2.400" /></svg></button>
                  </div>
                  <div class="line">
                    <label for="shape">形状</label>
                    <span class="combo wide">
                      <svg viewBox="0 0 14 14"><path d="M1 1q11 0 12 12H8Q7 6 1 6z" fill="#58c3cb" /><path d="M1 1q11 0 12 12" fill="none" stroke="#c9404b" stroke-width="1.500" /><path d="M1 6q6 0 7 7M2 12l6-6M5 6h3v3" fill="none" stroke="#333" /></svg>
                      <select id="shape"><option>圆形</option></select><i class="tri"></i>
                    </span>
                  </div>
                  <div class="line">
                    <label for="radius">半径 1</label>
                    <span class="combo wide measure">
                      <span class="sel"><input id="radius" v-model="radius" type="text" /></span>
                      <span>mm</span><i class="tri"></i>
                    </span>
                  </div>
                  <div class="line slim">
                    <span>添加新集</span>
                    <button type="button" class="plus" aria-label="添加新集"><svg viewBox="0 0 16 16"><path d="M1 4h6M4 1v6" stroke="#1466e8" stroke-width="2" /><path d="M4 9h11M9.500 4v11" stroke="#a01e28" stroke-width="1.600" /><path d="M9.500 6l3 3-3 3-3-3z" fill="#a01e28" /></svg></button>
                  </div>
                  <div class="listbox">
                    <button type="button" class="subhead">列表<svg class="chev" viewBox="0 0 16 12"><path d="M0 12L6 0h4l6 12h-4L8 4 4 12z" fill="#0f6478" /></svg></button>
                    <div class="listrow">
                      <ul><li v-for="n in 4" :key="n"></li></ul>
                      <button type="button" class="del" aria-label="移除"><svg viewBox="0 0 14 14"><path d="M2 2l10 10M12 2L2 12" stroke="#949494" stroke-width="2.200" /></svg></button>
                    </div>
                  </div>
                </section>

                <div class="closed">
                  <button v-for="s in collapsed" :key="s" type="button" class="head">
                    {{ s }}<svg class="chev" viewBox="0 0 16 12"><path d="M0 0L6 12h4L16 0h-4L8 8 4 0z" fill="#0f6478" /></svg>
                  </button>
                </div>

                <section class="card">
                  <button type="button" class="head">预览<svg class="chev" viewBox="0 0 16 12"><path d="M0 12L6 0h4l6 12h-4L8 4 4 12z" fill="#0f6478" /></svg></button>
                  <div class="line result">
                    <label class="check"><input v-model="preview" type="checkbox" />预览</label>
                    <span class="show">显示结果</span>
                    <button type="button" class="glass" aria-label="显示结果"><svg viewBox="0 0 22 22"><path d="M13 13l7 7" stroke="#444" stroke-width="3" /><circle cx="8.500" cy="8.500" r="6.500" fill="#f0f2f2" stroke="#999" stroke-width="1.800" /></svg></button>
                  </div>
                </section>
              </div>
            </section>

            <p class="stamp one"><b>百度ID：</b>ffjczr</p>
            <p class="stamp two"><b>百度ID：</b>ffjczr</p>
            <p class="stamp three"><b>百度ID：</b>ffjczr</p>
          </div>

          <svg class="cursor" viewBox="0 0 10 24"><path d="M5 1l4 5H6.500v12H9l-4 5-4-5h2.500V6H1z" fill="#fff" stroke="#333" /></svg>
        </main>
      </div>
    </div>
  </div>
</template>

<style>
body {
  margin: 0;
  background: #fff;
}
</style>

<style scoped>
.app {
  display: flex;
  flex-direction: column;
  height: 100vh;
  min-height: 700px;
  overflow: hidden;
  padding: 0 4px;
  box-sizing: border-box;
  font-family: "Noto Sans", "Noto Sans CJK SC", sans-serif;
  font-size: 14px;
  color: #222;
}
button, input, select {
  font: inherit;
  color: inherit;
  background: none;
  border: 0;
  padding: 0;
  margin: 0;
}
input, select { outline: none; min-width: 0; }
select { appearance: none; }
svg { display: block; flex: none; }
.title {
  display: flex;
  align-items: center;
  height: 32px;
  padding-top: 2px;
  box-sizing: border-box;
}
.logo {
  width: 40px;
  margin-left: 3px;
  margin-right: 3px;
  font: bold 24px/28px "Liberation Sans", sans-serif;
  color: #7e929e;
}
.caption { font-size: 16px; color: #111; }
.window {
  flex: 1;
  min-height: 0;
  display: flex;
  flex-direction: column;
  border-right: 1px solid #ddd;
  margin-right: -1px;
}
.menubar {
  display: flex;
  align-items: center;
  gap: 13px;
  flex: 0 0 28px;
  background: #529eb7;
}
.menubar button { color: #12262e; white-space: nowrap; line-height: 26px; padding-bottom: 2px; }
.menubar button:first-of-type { margin-left: -7px; }
.menubar .wide { margin-left: 9px; }
.grip {
  flex: 0 0 6px;
  height: 26px;
  background: radial-gradient(circle at 3px 2px, #a5a5a5 1px, transparent 1px) 0 0 / 6px 4px;
}
.toolbar {
  display: flex;
  align-items: center;
  flex: 0 0 32px;
  box-sizing: border-box;
  border-bottom: 1px solid #e0e0e0;
  overflow: hidden;
}
.row0 { flex-basis: 33px; }
.row2 { border-bottom: 2px solid #aaa; padding-left: 4px; }
.group { display: flex; flex: 1 1 0; min-width: 0; }
.tool {
  flex: 1 1 0;
  min-width: 0;
  height: 24px;
  display: flex;
  align-items: center;
  justify-content: center;
}
.tool svg { width: 20px; height: 20px; }
.row2 .tool svg { width: 16px; height: 16px; }
.row2 .active { background: #cbe5f6; outline: 1px solid #a5cde8; height: 20px; margin-top: 2px; }
.row2 .active svg { width: 18px; height: 18px; }
.drop { flex: 0 0 15px; display: flex; justify-content: center; }
.row2 .drop { flex-basis: 13px; }
.tri {
  flex: none;
  width: 0;
  height: 0;
  border: 4px solid transparent;
  border-top: 4px solid #111;
  border-bottom: 0;
}
.sep { flex: 0 0 1px; margin: 0 2px; height: 28px; background: #dcdcdc; }
.tail { flex: 0 0 4px; }
.start { display: flex; align-items: center; flex: 0 0 69px; white-space: nowrap; }
.start svg { width: 22px; height: 22px; margin: 0 4px 0 3px; }
.start .tri { margin-left: 2px; }
.search { display: flex; align-items: center; margin-left: 5px; }
.finder {
  display: flex;
  align-items: center;
  width: 153px;
  height: 22px;
  box-sizing: border-box;
  border: 1px solid #9a9a9a;
  padding: 0 4px 0 1px;
}
.finder input { flex: 1; }
.finder svg { width: 15px; height: 15px; }
.low { flex-basis: 20px; padding-top: 11px; }
.combo {
  display: flex;
  align-items: center;
  height: 22px;
  flex: none;
  box-sizing: border-box;
  border: 1px solid #9a9a9a;
  background: #fff;
  padding: 0 6px 0 2px;
}
.combo select { flex: 1; }
.combo .tri, .bubble .tri { border-width: 5px 5px 0; }
.tiny { width: 58px; margin: 0 4px 0 2px; }
.small { width: 165px; margin-right: 6px; }
.large { width: 174px; }
.work { flex: 1; min-height: 0; display: flex; }
.rail {
  flex: 0 0 30px;
  display: flex;
  flex-direction: column;
  background: #fff;
}
.stack { flex: 1 1 0; min-height: 0; display: flex; flex-direction: column; }
.rail .tool { width: 30px; height: auto; min-height: 0; }
.dots {
  flex: 0 0 7px;
  margin: 0 4px;
  background: radial-gradient(circle at 2px 3px, #a0a0a0 1px, transparent 1px) 0 0 / 4px 7px;
}
.ruled { border-top: 1px solid #ddd; }
.back { flex: 0 0 15px; padding-left: 8px; }
.back i {
  display: block;
  width: 0;
  border: 4px solid transparent;
  border-right: 4px solid #111;
  border-left: 0;
}
.stage {
  position: relative;
  flex: 1;
  min-width: 0;
  display: flex;
  flex-direction: column;
}
.tabs { flex: 0 0 25px; display: flex; border-bottom: 1px solid #529eb7; background: #fff; }
.tab {
  display: flex;
  align-items: center;
  gap: 5px;
  padding: 0 4px 0 5px;
  background: #529eb7;
  color: #fff;
  font-size: 15px;
}
.part { width: 14px; height: 14px; }
.mark { width: 10px; height: 10px; }
.canvas {
  position: relative;
  flex: 1;
  overflow: hidden;
  background: linear-gradient(#b3b6b8, #c4c8ca 26%, #d2d6d8 52%, #e0e3e6 75%, #eef1f4);
}
.model { position: absolute; left: 556px; top: 147px; width: 406px; height: 260px; }
.triad { position: absolute; left: 37px; bottom: 0; width: 44px; height: 16px; }
.bubble {
  position: absolute;
  left: 671px;
  top: 201px;
  display: flex;
  align-items: center;
  height: 32px;
  box-sizing: border-box;
  border: 1px solid #c4c4c4;
  background: #f4f4f4;
  padding-right: 2px;
}
.bubble label { margin: 0 3px 0 10px; font-size: 15px; }
.field {
  display: flex;
  align-items: center;
  width: 78px;
  height: 27px;
  box-sizing: border-box;
  background: #fff;
  border: 1px solid #a5a5a5;
  padding: 0 5px 0 3px;
  font-size: 15px;
}
.field input { flex: 1; width: 20px; }
.dialog {
  position: absolute;
  left: 113px;
  top: 0;
  width: 373px;
  min-height: 100%;
  box-sizing: border-box;
  border-right: 1px solid #d0d0d0;
  background: #ececec;
  font-size: 15px;
}
.bar {
  display: flex;
  align-items: center;
  gap: 11px;
  height: 28px;
  padding: 0 9px;
  background: #529eb7;
  color: #fff;
}
.bar svg { width: 14px; height: 14px; }
.bar h1 { flex: 1; margin: 0 0 0 -3px; font-size: 19px; line-height: 28px; font-weight: 400; }
.body { padding: 2px 5px 0; }
.card { background: #fff; border-bottom: 2px solid #d4d4d4; }
.first { height: 316px; box-sizing: border-box; margin-bottom: 2px; }
.head {
  display: flex;
  align-items: center;
  justify-content: space-between;
  width: 100%;
  height: 32px;
  padding: 0 5px 0 6px;
  font-size: 19px;
  color: #17647f;
  line-height: 28px;
}
.card .head { padding-bottom: 2px; }
.chev { width: 16px; height: 12px; }
.line {
  display: flex;
  align-items: center;
  justify-content: space-between;
  height: 30px;
  padding: 0 8px;
}
.wide.combo { width: 136px; height: 27px; padding: 0 6px 0 4px; gap: 4px; }
.wide svg { width: 14px; height: 14px; }
.pick { gap: 2px; }
.chosen {
  flex: 1;
  height: 28px;
  display: flex;
  align-items: center;
  gap: 4px;
  padding-left: 1px;
  background: #ffe17a;
}
.chosen svg { width: 12px; height: 12px; }
.edgebtn { width: 28px; height: 28px; background: #ffe17a; }
.edgebtn svg { width: 22px; height: 22px; margin: 0 auto; }
.measure .sel { flex: 1; display: flex; }
.measure input { width: 19px; background: #1076cc; color: #fff; line-height: 20px; height: 20px; }
.measure .tri { margin-left: 6px; }
.slim { height: 26px; }
.plus { width: 22px; height: 24px; background: #73b2c8; }
.plus svg { width: 16px; height: 16px; margin: 0 auto; }
.listbox {
  margin: 1px 8px 0;
  height: 129px;
  box-sizing: border-box;
  border: 1px solid #dadada;
  background: #f0f0f0;
  padding: 0 7px;
}
.subhead {
  display: flex;
  align-items: center;
  justify-content: space-between;
  width: 100%;
  height: 24px;
  color: #17647f;
  padding-right: 4px;
}
.subhead .chev { width: 14px; height: 10px; }
.listrow { display: flex; align-items: flex-start; gap: 2px; padding-top: 7px; }
.listrow ul {
  flex: 1;
  margin: 0;
  padding: 0;
  list-style: none;
  border: 1px solid #d8d8d8;
  background: #fff;
}
.listrow li { height: 22px; border-bottom: 1px solid #e6e6e6; }
.listrow li:nth-child(even) { background: #f9f9f9; }
.listrow li:last-child { height: 18px; border: 0; }
.del { width: 22px; height: 22px; border: 1px solid #d0d0d0; box-sizing: border-box; }
.del svg { width: 14px; height: 14px; margin: 0 auto; }
.closed { display: grid; grid-auto-rows: 1fr; height: 182px; }
.closed .head { height: auto; min-height: 0; background: #fff; border-bottom: 2px solid #d4d4d4; }
.result { height: 34px; }
.check { display: flex; align-items: center; gap: 4px; }
.check input {
  appearance: none;
  width: 17px;
  height: 17px;
  box-sizing: border-box;
  border: 1px solid #444;
  display: grid;
  place-items: center;
}
.check input:checked::before {
  content: "";
  width: 9px;
  height: 5px;
  box-sizing: border-box;
  border-left: 1px solid #222;
  border-bottom: 1px solid #222;
  rotate: -45deg;
}
.show { margin-left: auto; margin-right: 2px; }
.glass { width: 28px; height: 28px; box-sizing: border-box; border: 1px solid #aaa; background: #f7f7f7; }
.glass svg { width: 22px; height: 22px; margin: 0 auto; }
.stamp {
  position: absolute;
  display: flex;
  align-items: baseline;
  margin: 0;
  white-space: nowrap;
  font: 47px/52px "Liberation Serif", serif;
  color: #777;
  opacity: .24;
  pointer-events: none;
}
.stamp b { width: 150px; font: 900 36px/52px "Noto Sans CJK SC", sans-serif; }
.one { left: 113px; top: 366px; }
.two { left: 54px; top: 453px; }
.three { left: 2px; top: 541px; }
.three b { width: 145px; }
.cursor { position: absolute; left: 158px; top: 17px; width: 10px; height: 24px; }
</style>
